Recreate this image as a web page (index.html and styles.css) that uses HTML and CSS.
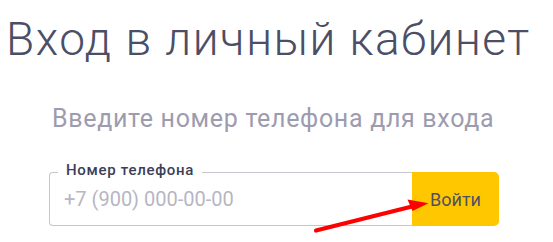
FILE: index.html
```html
<!DOCTYPE html>
<html lang="ru">
<head>
<meta charset="utf-8">
<title>Вход в личный кабинет</title>
<link rel="stylesheet" href="styles.css">
</head>
<body>
<main class="page">
  <h1 class="title">Вход в личный кабинет</h1>
  <p class="subtitle">Введите номер телефона для входа</p>
  <form class="login">
    <fieldset class="phone">
      <legend class="phone-label">Номер телефона</legend>
      <input class="phone-input" type="tel" placeholder="+7 (900) 000-00-00">
    </fieldset>
    <button class="submit" type="button">Войти</button>
  </form>
  <svg class="arrow" width="553" height="242" viewBox="0 0 553 242" aria-hidden="true">
    <line x1="316" y1="230.5" x2="412" y2="206.5" stroke="#ff0000" stroke-width="4.2" stroke-linecap="round"/>
    <polygon points="428.5,203.2 407.5,199.5 412.5,211" fill="#ff0000"/>
  </svg>
</main>
</body>
</html>
```

FILE: styles.css
```css
html, body {
  margin: 0;
  padding: 0;
  background: #ffffff;
}

.page {
  position: relative;
  width: 553px;
  height: 242px;
  overflow: hidden;
  display: flex;
  flex-direction: column;
  font-family: Roboto, "Noto Sans", sans-serif;
}

.title {
  margin: 12px 0 0 6px;
  font-size: 46px;
  font-weight: 300;
  letter-spacing: 1.5px;
  line-height: normal;
  color: #4b4e66;
  white-space: nowrap;
}

.subtitle {
  margin: 38px 0 0 52px;
  font-size: 25px;
  font-weight: 400;
  letter-spacing: 0.68px;
  line-height: normal;
  color: #9d9cae;
  white-space: nowrap;
}

.login {
  margin: 28px 0 0 49px;
  display: flex;
  align-items: flex-end;
  width: 450px;
}

.phone {
  flex: 1;
  margin: 0;
  min-width: 0;
  padding: 3px 14px 14px 8px;
  border: 1px solid #c6c6ce;
  border-right: none;
  border-radius: 4px 0 0 4px;
}

.phone-label {
  padding: 0 8px 4px 8px;
  font-size: 15px;
  font-weight: 500;
  letter-spacing: 0.7px;
  line-height: normal;
  color: #3c3e58;
}

.phone-input {
  display: block;
  width: 100%;
  box-sizing: border-box;
  height: 25px;
  margin: 0;
  padding: 0 0 0 6px;
  border: none;
  outline: none;
  background: transparent;
  font-family: Roboto, "Noto Sans", sans-serif;
  font-size: 20px;
  color: #3c3e58;
}

.phone-input::placeholder {
  color: #b7b6c2;
  opacity: 1;
}

.submit {
  width: 87px;
  height: 54px;
  margin: 0;
  padding: 0;
  border: none;
  border-radius: 0 5px 5px 0;
  background: #ffc700;
  font-family: Roboto, "Noto Sans", sans-serif;
  font-size: 18px;
  font-weight: 400;
  color: #505060;
  cursor: pointer;
}

.arrow {
  position: absolute;
  left: 0;
  top: 0;
  pointer-events: none;
}
```
